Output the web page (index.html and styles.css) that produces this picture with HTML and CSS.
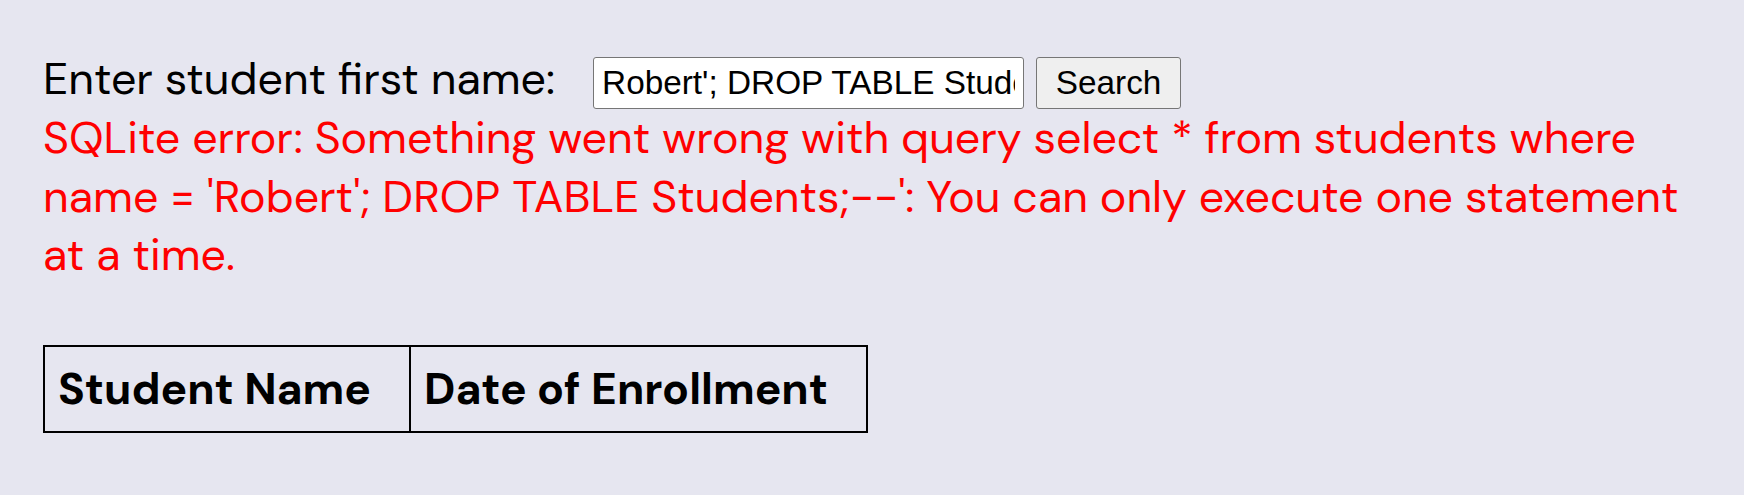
FILE: index.html
```html
<!DOCTYPE html>
<html lang="en">
<head>
<meta charset="utf-8">
<title>Student Search</title>
<link rel="stylesheet" href="styles.css">
</head>
<body>
<main class="page">
  <form class="search-row">
    <label class="search-label" for="student">Enter student first name:</label>
    <input class="search-input" id="student" type="text" value="Robert'; DROP TABLE Students;--">
    <button class="search-button" type="button">Search</button>
  </form>
  <p class="error">SQLite error: Something went wrong with query select * from students where name = 'Robert'; DROP TABLE Students;--': You can only execute one statement at a time.</p>
  <table class="results">
    <thead>
      <tr>
        <th class="col-name">Student Name</th>
        <th class="col-date">Date of Enrollment</th>
      </tr>
    </thead>
  </table>
</main>
</body>
</html>
```
FILE: styles.css
```css
html, body {
  margin: 0;
  padding: 0;
  background: #e6e6f0;
}

body {
  font-family: "DM Sans", Inter, sans-serif;
  font-size: 44.75px;
  line-height: 58.5px;
  color: #000;
}

.page {
  padding: 50px 43px 0 43px;
}

.search-row {
  display: flex;
  align-items: baseline;
  gap: 12px;
  margin: 0;
}

.search-label {
  margin-right: 26px;
}

.search-input {
  box-sizing: border-box;
  width: 431px;
  height: 52px;
  padding: 0 8px;
  border: 1px solid #767676;
  border-radius: 3px;
  background: #fff;
  color: #000;
  font-family: "Liberation Sans", Arial, sans-serif;
  font-size: 33.33px;
}

.search-button {
  box-sizing: border-box;
  width: 145px;
  height: 52px;
  padding: 0;
  border: 1px solid #767676;
  border-radius: 3px;
  background: #efefef;
  color: #000;
  font-family: "Liberation Sans", Arial, sans-serif;
  font-size: 33.33px;
  text-align: center;
}

.error {
  margin: 0;
  color: #ff0000;
}

.results {
  margin-top: 60px;
  border-collapse: collapse;
}

.results th {
  border: 2px solid #000;
  padding: 13px 38px 13px 13px;
  text-align: left;
  font-size: 44.4px;
  font-weight: 700;
  white-space: nowrap;
}
```
